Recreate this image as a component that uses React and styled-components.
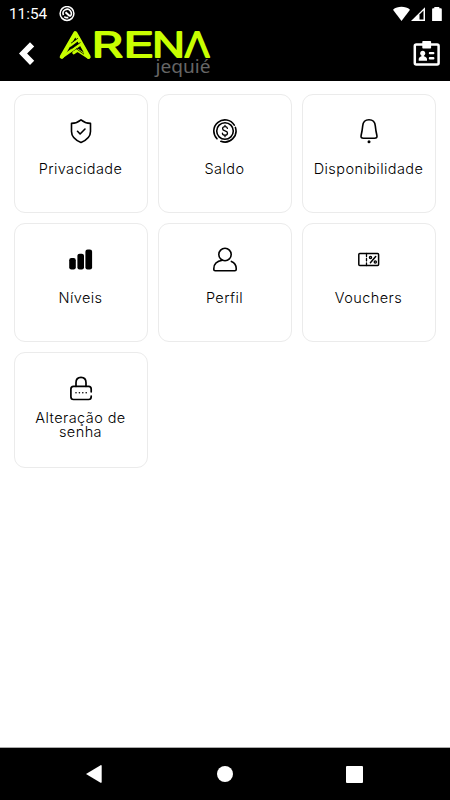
import React from 'react';
import styled, { createGlobalStyle } from 'styled-components';

const GlobalStyle = createGlobalStyle`
  * {
    box-sizing: border-box;
  }

  body {
    margin: 0;
    background-color: #fff;
    font-family: 'Inter', 'Noto Sans', sans-serif;
  }
`;

const Screen = styled.div`
  display: flex;
  flex-direction: column;
  width: 450px;
  height: 800px;
  overflow: hidden;
`;

const Header = styled.header`
  height: 81px;
  background-color: #000;
  color: #fff;
`;

const StatusBar = styled.div`
  display: flex;
  align-items: center;
  height: 27px;
  padding: 0 8px 0 9px;
`;

const Clock = styled.span`
  width: 39px;
  padding-top: 2px;
  font-family: 'Roboto', sans-serif;
  font-size: 15.3px;
  line-height: 25px;
  white-space: nowrap;
`;

const StatusIcon = styled.svg`
  display: block;
  flex: none;
  margin-left: ${(props) => props.$left || '0'};
`;

const Toolbar = styled.div`
  display: flex;
  align-items: center;
  height: 54px;
`;

const IconButton = styled.button`
  display: block;
  width: ${(props) => props.$width};
  height: 54px;
  margin-left: ${(props) => props.$left || '0'};
  padding: 0;
  border: 0;
  background: none;
  color: inherit;
  cursor: pointer;

  svg {
    display: block;
  }
`;

const Logo = styled.svg`
  display: block;
  flex: none;
  overflow: visible;
`;

const LogoName = styled.text`
  font-family: 'Inter', sans-serif;
  font-size: 34.5px;
  font-weight: 300;
  fill: #c8ff00;
  stroke: #c8ff00;
  stroke-width: 2px;
  stroke-linejoin: round;
`;

const LogoCity = styled.text`
  font-family: 'Noto Sans', sans-serif;
  font-size: 17.5px;
  fill: #666;
`;

const Menu = styled.main`
  flex: 1;
  display: grid;
  grid-template-columns: repeat(3, 134px);
  grid-template-rows: 119px 119px 116px;
  gap: 10px;
  padding: 13px 14px 0 13.5px;
`;

const MenuCard = styled.a`
  display: flex;
  flex-direction: column;
  align-items: center;
  padding-top: 22.5px;
  border: 1px solid #ebebeb;
  border-radius: 11px;
  color: #000;
  text-decoration: none;
`;

const CardIcon = styled.svg`
  display: block;
  flex: none;
  width: 26px;
  height: 26px;
  fill: none;
  stroke: #000;
  stroke-width: 1.6;
  stroke-linecap: round;
  stroke-linejoin: round;
`;

const CardLabel = styled.span`
  margin-top: ${(props) => (props.$multiline ? '9.5px' : '18.5px')};
  font-size: 14.5px;
  font-weight: 300;
  line-height: 14px;
  letter-spacing: 0.42px;
  text-align: center;
  white-space: pre-line;
`;

const NavigationBar = styled.nav`
  display: flex;
  justify-content: space-between;
  align-items: center;
  height: 53px;
  padding: 0 87px 0 86px;
  border-top: 1px solid #aaa;
  background-color: #000;

  svg {
    display: block;
    fill: #fff;
  }
`;

const ShieldIcon = () => (
  <CardIcon viewBox='0 0 26 26'>
    <path d='M13 1.800c2.700 2.300 5.800 3.400 9.500 3.600v8c0 4.700-3.800 8.600-9.500 11-5.700-2.400-9.500-6.300-9.500-11v-8C7.200 5.200 10.300 4.100 13 1.800Z' />
    <path d='m9.500 13.300 2.600 2.700 4.900-5' />
  </CardIcon>
);

const CoinIcon = () => (
  <CardIcon viewBox='0 0 26 26'>
    <circle cx='13' cy='13' r='8.300' />
    <path d='M22.300 7.100A11.100 11.100 0 1 0 5 20.800M8.900 23.300A11.100 11.100 0 0 0 23.400 9.400' />
    <path
      d='M15.400 10.400c-.2-1.200-1.100-1.700-2.400-1.700s-2.400.7-2.400 2c0 2.900 4.900 1.400 4.900 4.300 0 1.400-1 2.200-2.500 2.200s-2.500-.7-2.600-2M13 7.300v1.400M13 17.200v1.500'
      strokeWidth='1.300'
    />
  </CardIcon>
);

const BellIcon = () => (
  <CardIcon viewBox='0 0 26 26'>
    <path d='M13 1.700c-4 0-6 2.500-6.300 6.200-.3 3.500-.8 6.200-1.600 9.600-.5 2 .6 2.700 2.400 2.700h11c1.800 0 2.900-.7 2.400-2.700-.8-3.400-1.300-6.100-1.600-9.600C19 4.200 17 1.700 13 1.700Z' />
    <circle cx='13' cy='23.700' r='1.500' fill='#000' stroke='none' />
  </CardIcon>
);

const LevelsIcon = () => (
  <CardIcon viewBox='0 0 26 26'>
    <g fill='#000' stroke='none'>
      <rect x='1.200' y='11' width='6.600' height='11.500' rx='2.200' />
      <rect x='9.400' y='6.700' width='6.600' height='15.800' rx='2.200' />
      <rect x='17.400' y='2.500' width='6.700' height='20' rx='2.200' />
    </g>
  </CardIcon>
);

const ProfileIcon = () => (
  <CardIcon viewBox='0 0 26 26'>
    <circle cx='13' cy='7.500' r='6.200' />
    <path d='M10.400 13.300c-5 .7-8.600 3.700-8.600 8.400v.8c0 .8.500 1.200 1.300 1.200h19.800c.8 0 1.300-.4 1.300-1.200v-1.300c0-3.100-1.700-5.400-4.800-6.800' />
  </CardIcon>
);

const VoucherIcon = () => (
  <CardIcon viewBox='0 0 26 26'>
    <rect x='2.800' y='6.500' width='19.800' height='12' rx='1' strokeWidth='1.500' />
    <path d='M10.500 6.500v3M10.500 11.500v2.400M10.500 16v2.500' strokeWidth='1.300' />
    <path d='m14.400 15.700 5.300-6.100' strokeWidth='1.500' />
    <circle cx='14.500' cy='10.400' r='1.100' strokeWidth='1.300' />
    <circle cx='19.300' cy='15' r='1.100' strokeWidth='1.300' />
  </CardIcon>
);

const LockIcon = () => (
  <CardIcon viewBox='0 0 26 26'>
    <path
      d='M8 10.300V6.700c0-3.300 2-5.400 5-5.400s5 2.100 5 5.400v3.600'
      strokeWidth='1.700'
    />
    <path
      d='M23.200 15.800V13c0-1.700-.9-2.700-2.600-2.700H5.500c-1.700 0-2.600 1-2.600 2.700v7.800c0 1.700.9 2.700 2.600 2.700h15.100c1.700 0 2.600-1 2.600-2.700V20'
      strokeWidth='1.700'
    />
    <path
      d='M8 16.800h.01M11.400 16.800h.01M14.800 16.800h.01M18.200 16.800h.01'
      strokeWidth='1.600'
    />
  </CardIcon>
);

const BrandLogo = () => (
  <Logo width='155' height='54' viewBox='58 27 155 54'>
    {/* striped triangle that opens the name */}
    <g
      fill='none'
      stroke='#c8ff00'
      strokeLinecap='round'
      strokeLinejoin='round'
    >
      <path d='M61.800 56.800 75.300 33.200 88.600 56.800' strokeWidth='4.200' />
      <path d='M62.200 56.800 79.500 44.800' strokeWidth='2.800' />
      <path d='M70.300 45.400 78 39.800' strokeWidth='2.500' />
      <path d='M73.800 52.800 77.500 50.300 87.500 56.800' strokeWidth='3' />
    </g>
    <path
      d='m71 43.200 7-5M71.500 48.800l9-6.400M76 48.500l8 5.700'
      fill='none'
      stroke='#000'
      strokeWidth='.8'
    />
    <LogoName y='57.400'>
      <tspan x='91.500' textLength='31.500' lengthAdjust='spacingAndGlyphs'>
        R
      </tspan>
      <tspan x='123.200' textLength='31' lengthAdjust='spacingAndGlyphs'>
        E
      </tspan>
      <tspan x='152' textLength='33' lengthAdjust='spacingAndGlyphs'>
        N
      </tspan>
      <tspan x='184.300' textLength='25.800' lengthAdjust='spacingAndGlyphs'>
        Λ
      </tspan>
    </LogoName>
    <LogoCity x='155.500' y='73' textLength='55' lengthAdjust='spacingAndGlyphs'>
      jequié
    </LogoCity>
  </Logo>
);

const menuItems = [
  { text: 'Privacidade', Icon: ShieldIcon },
  { text: 'Saldo', Icon: CoinIcon },
  { text: 'Disponibilidade', Icon: BellIcon },
  { text: 'Níveis', Icon: LevelsIcon },
  { text: 'Perfil', Icon: ProfileIcon },
  { text: 'Vouchers', Icon: VoucherIcon },
  { text: 'Alteração de\nsenha', Icon: LockIcon, multiline: true },
];

const MenuItem = (props) => {
  const { text, Icon, multiline } = props;

  return (
    <MenuCard href='#'>
      <Icon />
      <CardLabel $multiline={multiline}>{text}</CardLabel>
    </MenuCard>
  );
};

const AppHeader = () => (
  <Header>
    <StatusBar>
      <Clock>11:54</Clock>
      <StatusIcon width='16' height='16' viewBox='0 0 16 16' $left='11px'>
        <circle
          cx='8'
          cy='7.500'
          r='6.900'
          fill='none'
          stroke='#fff'
          strokeWidth='1.500'
        />
        <path
          d='M4.500 9.200A4.100 4.100 0 1 1 11 10.400M5.300 10.600a4 4 0 0 0 4 .8'
          fill='none'
          stroke='#fff'
          strokeWidth='1.600'
        />
        <path d='m6.500 6.300 4.500 4' stroke='#fff' strokeWidth='2' />
      </StatusIcon>
      <StatusIcon width='50' height='16' viewBox='392 5 50 16' $left='auto'>
        <path d='M393 8.700c4.500-3.800 12.500-3.800 17 0L401.500 20Z' fill='#fff' />
        <path d='M411 20 425 6.200V20Z' fill='#fff' />
        <path d='M419.500 18.500v-5l4-4v9Z' fill='#000' />
        <path
          d='M434.300 7.300V6h5v1.300h1.300c.7 0 1.200.5 1.200 1.200V20h-9.700V8.500c0-.7.500-1.200 1.200-1.200Z'
          fill='#fff'
        />
      </StatusIcon>
    </StatusBar>
    <Toolbar>
      <IconButton $width='58px' aria-label='Voltar'>
        <svg width='58' height='54' viewBox='0 27 58 54'>
          <path
            d='m19 53.500 11-11.300 4.200 4.200-7.100 7.200 7.100 7.200-4.200 4.100Z'
            fill='#fff'
          />
        </svg>
      </IconButton>
      <BrandLogo />
      <IconButton $width='40px' $left='auto' aria-label='Carteirinha'>
        <svg width='40' height='54' viewBox='410 27 40 54'>
          <rect
            x='414.800'
            y='44.500'
            width='23.800'
            height='20'
            rx='1.500'
            fill='none'
            stroke='#fff'
            strokeWidth='2.500'
          />
          <g fill='#fff'>
            <rect x='422.300' y='41' width='8.800' height='7.500' rx='.8' />
            <circle cx='422.700' cy='53.200' r='2.500' />
            <path d='M421.500 54h2.400v2.200c2 .6 3.100 1.700 3.100 3v1.500h-8.300v-1.500c0-1.300 1-2.400 2.800-3Z' />
            <rect x='428.800' y='52' width='5.600' height='2.300' rx='1' />
            <rect x='428.800' y='57' width='5.600' height='2.400' rx='1' />
          </g>
        </svg>
      </IconButton>
    </Toolbar>
  </Header>
);

const App = () => (
  <>
    <GlobalStyle />
    <Screen>
      <AppHeader />
      <Menu>
        {menuItems.map((item) => (
          <MenuItem key={item.text} {...item} />
        ))}
      </Menu>
      <NavigationBar>
        <svg width='18' height='18' viewBox='0 0 18 18'>
          <path d='M0 9 14.600.200c.5-.3 1.100 0 1.100.7v16.200c0 .7-.6 1-1.100.7Z' />
        </svg>
        <svg width='16' height='16' viewBox='0 0 16 16'>
          <circle cx='8' cy='8' r='8' />
        </svg>
        <svg width='17' height='17' viewBox='0 0 17 17'>
          <rect width='17' height='17' rx='1' />
        </svg>
      </NavigationBar>
    </Screen>
  </>
);

export default App;
